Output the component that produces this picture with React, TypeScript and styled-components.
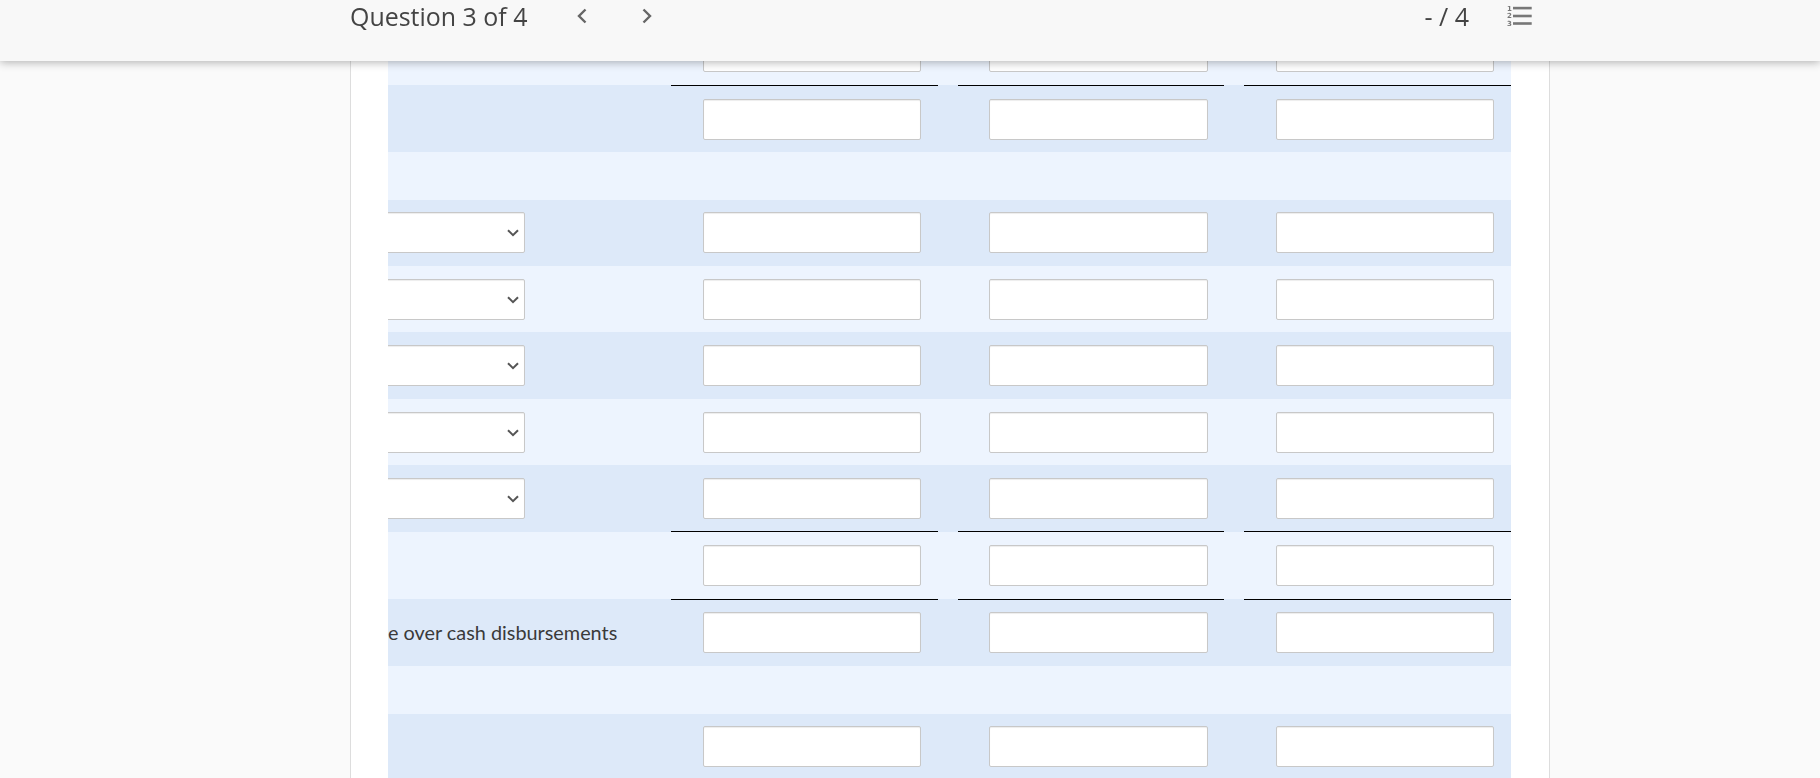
import React from "react";
import styled, { createGlobalStyle } from "styled-components";

const Global = createGlobalStyle`
  html, body { margin: 0; padding: 0; height: 778px; overflow: hidden; background: #fafafa; }
  * { box-sizing: border-box; }
`;

const TopBar = styled.header`
  position: fixed;
  top: 0;
  left: 0;
  right: 0;
  height: 61px;
  z-index: 5;
  display: flex;
  align-items: flex-start;
  padding: 0 288px 0 350px;
  background: #f8f8f8;
  box-shadow: 0 1px 9px rgba(0, 0, 0, 0.32);
  font-family: "Open Sans", sans-serif;
  color: #444;
`;

const Title = styled.h1`
  margin: 0;
  font-size: 24.95px;
  font-weight: 400;
  line-height: 33px;
`;

const NavGroup = styled.nav`
  display: flex;
  gap: 53px;
  margin-left: 48.6px;
  padding-top: 8px;
`;

const NavIcon = styled.svg`
  display: block;
  width: 12px;
  height: 16px;
  fill: none;
  stroke: #666;
  stroke-width: 2.4;
`;

const Points = styled.span`
  margin-left: auto;
  font-size: 25px;
  font-weight: 400;
  line-height: 33px;
`;

const ListIcon = styled.svg`
  display: block;
  width: 26px;
  height: 22px;
  margin: 5px 0 0 37px;
  fill: #777;
`;

const ListDigit = styled.text`
  font-family: "DejaVu Sans", sans-serif;
  font-size: 7px;
  font-weight: 700;
`;

const Card = styled.main`
  width: 1200px;
  margin: 18px 0 0 350px;
  padding: 0 38px 0 37px;
  background: #fff;
  border-left: 1px solid #ddd;
  border-right: 1px solid #ddd;
`;

const Row = styled.div<{ $height: number; $tone: "dark" | "light" }>`
  display: grid;
  grid-template-columns: 263px 266.5px 266.5px 267px;
  column-gap: 20px;
  height: ${(p) => p.$height}px;
  background: ${(p) => (p.$tone === "dark" ? "#dde9f9" : "#edf4fe")};
`;

const LabelCell = styled.div<{ $pad: number }>`
  padding-top: ${(p) => p.$pad}px;
  overflow: hidden;
`;

const SelectWrap = styled.div`
  position: relative;
  width: 137px;
  height: 41px;
`;

const ClippedSelect = styled.select`
  display: block;
  appearance: none;
  width: 150px;
  height: 41px;
  margin-left: -13px;
  background: #fff;
  border: 1px solid #c8c8c8;
  border-radius: 2px;
  box-shadow: inset 0 1px 1px rgba(0, 0, 0, 0.075);
`;

const SelectArrow = styled.svg`
  position: absolute;
  top: 17px;
  right: 6px;
  width: 12px;
  height: 8px;
  fill: none;
  stroke: #555;
  stroke-width: 2;
  pointer-events: none;
`;

const RowLabel = styled.span`
  display: block;
  font-family: Lato, sans-serif;
  font-size: 19.85px;
  line-height: 24px;
  color: #3a3a3a;
  white-space: nowrap;
  padding-top: 8px;
`;

const AmountCell = styled.div<{ $pad: number; $rule?: "inside" | "below" }>`
  position: relative;
  padding: ${(p) => p.$pad}px 17px 0 31.9px;
  ${(p) => (p.$rule === "below" ? "box-shadow: 0 1px 0 #000;" : "")}
  ${(p) => (p.$rule === "inside" ? "border-bottom: 1px solid #000;" : "")}
`;

const AmountInput = styled.input`
  display: block;
  width: 218.5px;
  height: 41px;
  padding: 0 12px;
  background: #fff;
  border: 1px solid #c8c8c8;
  border-radius: 2px;
  box-shadow: inset 0 1px 1px rgba(0, 0, 0, 0.075);
`;

type RowSpec = {
  height: number;
  tone: "dark" | "light";
  pad: number;
  inputs?: boolean;
  select?: boolean;
  label?: string;
  rule?: "inside" | "below";
};

const rows: RowSpec[] = [
  { height: 67, tone: "light", pad: 13, inputs: true, rule: "below" },
  { height: 67, tone: "dark", pad: 14, inputs: true },
  { height: 48, tone: "light", pad: 0 },
  { height: 66, tone: "dark", pad: 12, inputs: true, select: true },
  { height: 66, tone: "light", pad: 13, inputs: true, select: true },
  { height: 67, tone: "dark", pad: 13, inputs: true, select: true },
  { height: 66, tone: "light", pad: 13, inputs: true, select: true },
  { height: 67, tone: "dark", pad: 13, inputs: true, select: true, rule: "inside" },
  { height: 67, tone: "light", pad: 13, inputs: true, rule: "below" },
  { height: 67, tone: "dark", pad: 13, inputs: true, label: "e over cash disbursements" },
  { height: 48, tone: "light", pad: 0 },
  { height: 67, tone: "dark", pad: 12, inputs: true },
];

export default function App() {
  return (
    <>
      <Global />
      <TopBar>
        <Title>Question 3 of 4</Title>
        <NavGroup>
          <NavIcon viewBox="0 0 12 16" aria-label="Previous">
            <polyline points="9.5,1.5 3,8 9.5,14.5" />
          </NavIcon>
          <NavIcon viewBox="0 0 12 16" aria-label="Next">
            <polyline points="2.5,1.5 9,8 2.5,14.5" />
          </NavIcon>
        </NavGroup>
        <Points>- / 4</Points>
        <ListIcon viewBox="0 0 26 22" aria-label="Question list">
          <ListDigit x="1" y="5.5">1</ListDigit>
          <ListDigit x="1" y="13">2</ListDigit>
          <ListDigit x="1" y="21">3</ListDigit>
          <rect x="7" y="1.8" width="18.7" height="2.6" />
          <rect x="7" y="9.7" width="18.7" height="2.6" />
          <rect x="7" y="17.2" width="18.7" height="2.6" />
        </ListIcon>
      </TopBar>
      <Card>
        {rows.map((row, i) => (
          <Row key={i} $height={row.height} $tone={row.tone}>
            <LabelCell $pad={row.pad}>
              {row.select && (
                <SelectWrap>
                  <ClippedSelect aria-label="Account" />
                  <SelectArrow viewBox="0 0 12 8" aria-hidden="true">
                    <polyline points="1,1.2 6,6.2 11,1.2" />
                  </SelectArrow>
                </SelectWrap>
              )}
              {row.label && <RowLabel>{row.label}</RowLabel>}
            </LabelCell>
            {[0, 1, 2].map((c) => (
              <AmountCell key={c} $pad={row.pad} $rule={row.rule}>
                {row.inputs && <AmountInput type="text" />}
              </AmountCell>
            ))}
          </Row>
        ))}
      </Card>
    </>
  );
}
